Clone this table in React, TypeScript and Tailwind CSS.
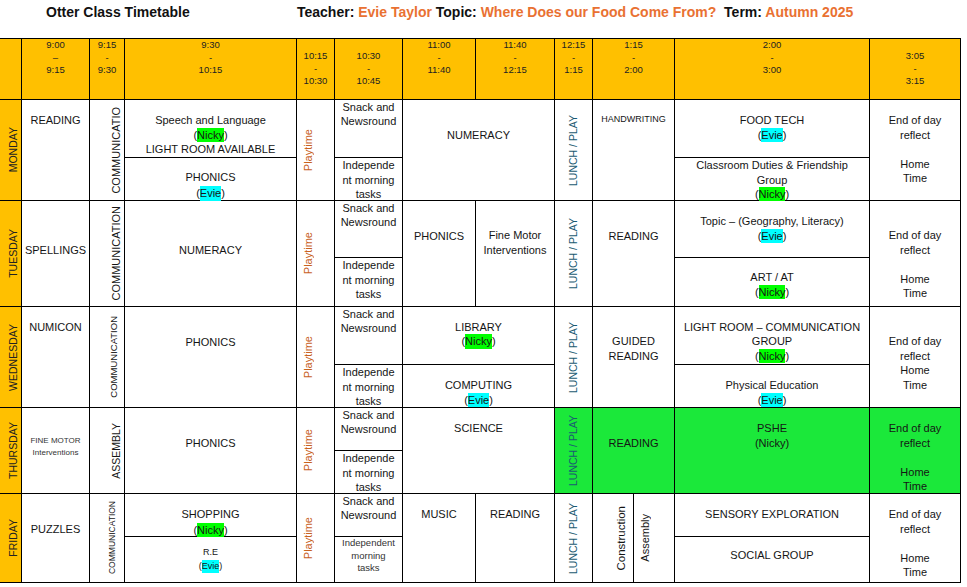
import type { ReactNode } from 'react';
import { twMerge } from 'tailwind-merge';

const vert = '[writing-mode:vertical-rl] rotate-180 whitespace-nowrap';

function Nicky() {
  return (
    <>
      (<span className="inline-block bg-[#00ff00]">Nicky</span>)
    </>
  );
}

function Evie() {
  return (
    <>
      (<span className="inline-block bg-[#00ffff]">Evie</span>)
    </>
  );
}

function C({ className, children }: { className: string; children?: ReactNode }) {
  return (
    <div
      className={twMerge(
        'flex flex-col items-center text-center text-[11px] leading-[14.5px] text-[#151515]',
        className
      )}
    >
      {children}
    </div>
  );
}

function H({ className, lines }: { className: string; lines: string[] }) {
  return (
    <div className={'flex flex-col items-center bg-[#ffc000] text-[9.5px] leading-[12.5px] text-[#222] ' + className}>
      {lines.map((l, i) => (
        <span key={i}>{l}</span>
      ))}
    </div>
  );
}

function Day({ className, label }: { className: string; label: string }) {
  return (
    <div className={'flex items-center justify-center bg-[#ffc000] pl-[6px] ' + className}>
      <span className={vert + ' text-[10.5px] leading-[13px] text-[#222]'}>{label}</span>
    </div>
  );
}

function Playtime({ className }: { className: string }) {
  return (
    <div className={'flex items-center bg-white pl-[5px] ' + className}>
      <span className={vert + ' text-[11px] leading-[13px] text-[#c8621f]'}>Playtime</span>
    </div>
  );
}

function Lunch({ className }: { className: string }) {
  return (
    <div className={'flex items-center justify-center ' + className}>
      <span className={vert + ' text-[10.5px] leading-[13px] text-[#1b5a72]'}>LUNCH / PLAY</span>
    </div>
  );
}

function EndOfDay({ className, gap }: { className: string; gap: boolean }) {
  return (
    <C className={className}>
      <span>End of day</span>
      <span>reflect</span>
      {gap && <span>&nbsp;</span>}
      <span>Home</span>
      <span>Time</span>
    </C>
  );
}

function Snack({ className }: { className: string }) {
  return (
    <C className={'bg-white leading-[14px] ' + className}>
      <span>Snack and</span>
      <span>Newsround</span>
    </C>
  );
}

function Indep({ className }: { className: string }) {
  return (
    <C className={'bg-white ' + className}>
      <span>Independe</span>
      <span>nt morning</span>
      <span>tasks</span>
    </C>
  );
}

export default function App() {
  return (
    <div className="min-h-[587px] w-[967px] bg-white font-['Liberation_Sans',Arial,sans-serif]">
      <div className="flex h-[38px] pl-[46px] pt-[4px] text-[14px] font-bold leading-[16px] text-[#111]">
        <span className="w-[251px]">Otter Class Timetable</span>
        <span className="whitespace-pre">
          Teacher: <span className="text-[#e97132]">Evie Taylor</span> Topic:{' '}
          <span className="text-[#e97132]">Where Does our Food Come From?</span>
          {'  '}Term: <span className="text-[#e97132]">Autumn 2025</span>
        </span>
      </div>

      <div className="grid w-fit grid-cols-[21px_67px_34px_171px_37px_67px_72px_78px_37px_40px_40px_194px_90px] grid-rows-[60px_57px_42px_56px_48px_57px_42px_42px_42px_42px_45px] gap-px bg-black pb-px pr-px pt-px">
        {/* header */}
        <div className="col-start-1 row-start-1 bg-[#ffc000]" />
        <H className="col-start-2 row-start-1" lines={['9:00', '–', '9:15']} />
        <H className="col-start-3 row-start-1" lines={['9:15', '-', '9:30']} />
        <H className="col-start-4 row-start-1" lines={['9:30', '-', '10:15']} />
        <H className="col-start-5 row-start-1 justify-center" lines={['10:15', '-', '10:30']} />
        <H className="col-start-6 row-start-1 justify-center" lines={['10:30', '-', '10:45']} />
        <H className="col-start-7 row-start-1" lines={['11:00', '-', '11:40']} />
        <H className="col-start-8 row-start-1" lines={['11:40', '-', '12:15']} />
        <H className="col-start-9 row-start-1" lines={['12:15', '-', '1:15']} />
        <H className="col-start-10 col-span-2 row-start-1" lines={['1:15', '-', '2:00']} />
        <H className="col-start-12 row-start-1" lines={['2:00', '-', '3:00']} />
        <H className="col-start-13 row-start-1 justify-center" lines={['3:05', '-', '3:15']} />

        {/* monday */}
        <Day className="col-start-1 row-start-2 row-span-2" label="MONDAY" />
        <C className="col-start-2 row-start-2 row-span-2 bg-white pt-[13px]">READING</C>
        <div className="col-start-3 row-start-2 row-span-2 flex items-center justify-end bg-white pr-px">
          <span className={vert + ' text-[11px] leading-[13px] text-[#151515]'}>COMMUNICATIO</span>
        </div>
        <C className="col-start-4 row-start-2 bg-white pt-[13px]">
          <span>Speech and Language</span>
          <span>
            <Nicky />
          </span>
          <span>LIGHT ROOM AVAILABLE</span>
        </C>
        <C className="col-start-4 row-start-3 bg-white pt-[12px]">
          <span>PHONICS</span>
          <span className="mt-[1.5px]">
            <Evie />
          </span>
        </C>
        <Playtime className="col-start-5 row-start-2 row-span-2" />
        <Snack className="col-start-6 row-start-2" />
        <Indep className="col-start-6 row-start-3" />
        <C className="col-start-7 col-span-2 row-start-2 row-span-2 bg-white pt-[28px]">NUMERACY</C>
        <Lunch className="col-start-9 row-start-2 row-span-2 bg-white" />
        <C className="col-start-10 col-span-2 row-start-2 row-span-2 bg-white pt-[13px] text-[9px] leading-[12px]">
          HANDWRITING
        </C>
        <C className="col-start-12 row-start-2 bg-white pt-[13px]">
          <span>FOOD TECH</span>
          <span>
            <Evie />
          </span>
        </C>
        <C className="col-start-12 row-start-3 bg-white">
          <span>Classroom Duties &amp; Friendship</span>
          <span>Group</span>
          <span>
            <Nicky />
          </span>
        </C>
        <EndOfDay className="col-start-13 row-start-2 row-span-2 bg-white pt-[13px]" gap />

        {/* tuesday */}
        <Day className="col-start-1 row-start-4 row-span-2" label="TUESDAY" />
        <C className="col-start-2 row-start-4 row-span-2 bg-white pt-[42px]">SPELLINGS</C>
        <div className="col-start-3 row-start-4 row-span-2 flex items-center justify-end bg-white pr-px">
          <span className={vert + ' text-[11px] leading-[13px] text-[#151515]'}>COMMUNICATION</span>
        </div>
        <C className="col-start-4 row-start-4 row-span-2 bg-white pt-[42px]">NUMERACY</C>
        <Playtime className="col-start-5 row-start-4 row-span-2" />
        <Snack className="col-start-6 row-start-4" />
        <Indep className="col-start-6 row-start-5" />
        <C className="col-start-7 row-start-4 row-span-2 bg-white pt-[28px]">PHONICS</C>
        <C className="col-start-8 row-start-4 row-span-2 bg-white pt-[27px] leading-[15px]">
          <span>Fine Motor</span>
          <span>Interventions</span>
        </C>
        <Lunch className="col-start-9 row-start-4 row-span-2 bg-white" />
        <C className="col-start-10 col-span-2 row-start-4 row-span-2 bg-white pt-[28px]">READING</C>
        <C className="col-start-12 row-start-4 bg-white pt-[13px]">
          <span>Topic – (Geography, Literacy)</span>
          <span>
            <Evie />
          </span>
        </C>
        <C className="col-start-12 row-start-5 bg-white pt-[12px]">
          <span>ART / AT</span>
          <span>
            <Nicky />
          </span>
        </C>
        <EndOfDay className="col-start-13 row-start-4 row-span-2 bg-white pt-[27px]" gap />

        {/* wednesday */}
        <Day className="col-start-1 row-start-6 row-span-2" label="WEDNESDAY" />
        <C className="col-start-2 row-start-6 row-span-2 bg-white pt-[12.5px]">NUMICON</C>
        <div className="col-start-3 row-start-6 row-span-2 flex items-center justify-end bg-white pr-[4px]">
          <span className={vert + ' text-[9.5px] leading-[12px] text-[#151515]'}>COMMUNICATION</span>
        </div>
        <C className="col-start-4 row-start-6 row-span-2 bg-white pt-[28px]">PHONICS</C>
        <Playtime className="col-start-5 row-start-6 row-span-2" />
        <Snack className="col-start-6 row-start-6" />
        <Indep className="col-start-6 row-start-7" />
        <C className="col-start-7 col-span-2 row-start-6 bg-white pt-[12.5px]">
          <span>LIBRARY</span>
          <span>
            <Nicky />
          </span>
        </C>
        <C className="col-start-7 col-span-2 row-start-7 bg-white pt-[13px]">
          <span>COMPUTING</span>
          <span>
            <Evie />
          </span>
        </C>
        <Lunch className="col-start-9 row-start-6 row-span-2 bg-white" />
        <C className="col-start-10 col-span-2 row-start-6 row-span-2 bg-white pt-[27px]">
          <span>GUIDED</span>
          <span>READING</span>
        </C>
        <C className="col-start-12 row-start-6 bg-white pt-[12.5px]">
          <span>LIGHT ROOM – COMMUNICATION</span>
          <span>GROUP</span>
          <span>
            <Nicky />
          </span>
        </C>
        <C className="col-start-12 row-start-7 bg-white pt-[13px]">
          <span>Physical Education</span>
          <span>
            <Evie />
          </span>
        </C>
        <EndOfDay className="col-start-13 row-start-6 row-span-2 bg-white pt-[27px]" gap={false} />

        {/* thursday */}
        <Day className="col-start-1 row-start-8 row-span-2" label="THURSDAY" />
        <C className="col-start-2 row-start-8 row-span-2 bg-white pt-[27px] text-[8px] leading-[12px] text-[#333]">
          <span>FINE MOTOR</span>
          <span>Interventions</span>
        </C>
        <div className="col-start-3 row-start-8 row-span-2 flex items-center justify-end bg-white pr-px">
          <span className={vert + ' text-[10.5px] leading-[13px] text-[#151515]'}>ASSEMBLY</span>
        </div>
        <C className="col-start-4 row-start-8 row-span-2 bg-white pt-[27.5px]">PHONICS</C>
        <Playtime className="col-start-5 row-start-8 row-span-2" />
        <Snack className="col-start-6 row-start-8" />
        <Indep className="col-start-6 row-start-9" />
        <C className="col-start-7 col-span-2 row-start-8 row-span-2 bg-white pt-[13px]">SCIENCE</C>
        <Lunch className="col-start-9 row-start-8 row-span-2 bg-[#1be83a]" />
        <C className="col-start-10 col-span-2 row-start-8 row-span-2 bg-[#1be83a] pt-[28px]">READING</C>
        <C className="col-start-12 row-start-8 row-span-2 bg-[#1be83a] pt-[13px]">
          <span>PSHE</span>
          <span>(Nicky)</span>
        </C>
        <EndOfDay className="col-start-13 row-start-8 row-span-2 bg-[#1be83a] pt-[13px]" gap />

        {/* friday */}
        <Day className="col-start-1 row-start-10 row-span-2" label="FRIDAY" />
        <C className="col-start-2 row-start-10 row-span-2 bg-white pt-[28px]">PUZZLES</C>
        <div className="col-start-3 row-start-10 row-span-2 flex items-center justify-end bg-white pr-[6px]">
          <span className={vert + ' text-[8.5px] leading-[11px] text-[#151515]'}>COMMUNICATION</span>
        </div>
        <C className="col-start-4 row-start-10 bg-white pt-[13px]">
          <span>SHOPPING</span>
          <span className="mt-[1.5px]">
            <Nicky />
          </span>
        </C>
        <C className="col-start-4 row-start-11 bg-white pt-[9px] text-[9px] leading-[13.5px]">
          <span>R.E</span>
          <span>
            <Evie />
          </span>
        </C>
        <Playtime className="col-start-5 row-start-10 row-span-2" />
        <Snack className="col-start-6 row-start-10" />
        <C className="col-start-6 row-start-11 bg-white text-[9.5px] leading-[12.5px] text-[#333]">
          <span>Independent</span>
          <span>morning</span>
          <span>tasks</span>
        </C>
        <C className="col-start-7 row-start-10 row-span-2 bg-white pt-[13px]">MUSIC</C>
        <C className="col-start-8 row-start-10 row-span-2 bg-white pt-[13px]">READING</C>
        <Lunch className="col-start-9 row-start-10 row-span-2 bg-white" />
        <div className="col-start-10 row-start-10 row-span-2 flex items-center justify-end bg-white pr-[5px]">
          <span className={vert + ' text-[11.5px] leading-[13px] text-[#151515]'}>Construction</span>
        </div>
        <div className="col-start-11 row-start-10 row-span-2 flex items-center justify-start bg-white pl-[5px]">
          <span className={vert + ' text-[11px] leading-[13px] text-[#151515]'}>Assembly</span>
        </div>
        <C className="col-start-12 row-start-10 bg-white pt-[13px]">SENSORY EXPLORATION</C>
        <C className="col-start-12 row-start-11 bg-white pt-[11px]">SOCIAL GROUP</C>
        <EndOfDay className="col-start-13 row-start-10 row-span-2 bg-white pt-[13px]" gap />
      </div>
    </div>
  );
}
